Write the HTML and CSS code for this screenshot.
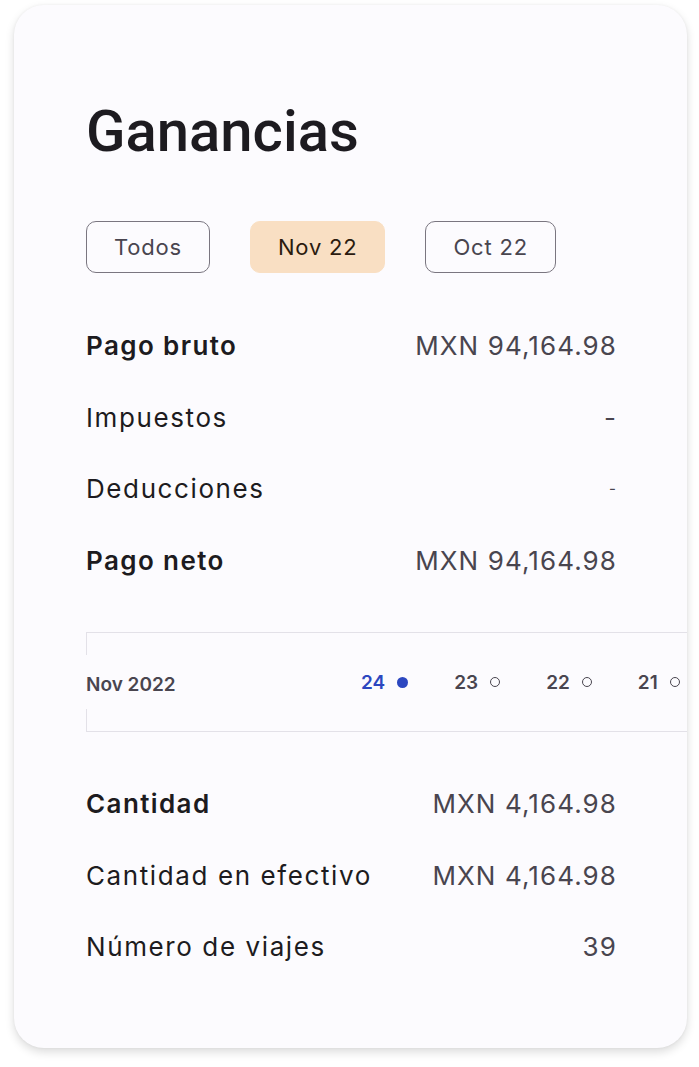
FILE: index.html
```html
<!DOCTYPE html>
<html lang="es">
  <head>
    <meta name="viewport" content="width=device-width, initial-scale=1">
    <link rel="stylesheet" href="styles.css">
    <title>Ganancias</title>
  </head>

  <body>
    <div class="card">
      <h1 class="title">Ganancias</h1>

      <div class="chips">
        <button class="chip">Todos</button>
        <button class="chip chipActive">Nov 22</button>
        <button class="chip">Oct 22</button>
      </div>

      <div class="rows">
        <div class="row strong"><span>Pago bruto</span><span class="value">MXN 94,164.98</span></div>
        <div class="row"><span>Impuestos</span><span class="value">-</span></div>
        <div class="row"><span>Deducciones</span><span class="value small">-</span></div>
        <div class="row strong"><span>Pago neto</span><span class="value">MXN 94,164.98</span></div>
      </div>

      <div class="timeline">
        <span class="month">Nov 2022</span>
        <div class="days">
          <div class="day current"><span>24</span><i class="dot"></i></div>
          <div class="day"><span>23</span><i class="dot"></i></div>
          <div class="day"><span>22</span><i class="dot"></i></div>
          <div class="day"><span>21</span><i class="dot"></i></div>
        </div>
      </div>

      <div class="rows">
        <div class="row strong"><span>Cantidad</span><span class="value">MXN 4,164.98</span></div>
        <div class="row"><span>Cantidad en efectivo</span><span class="value">MXN 4,164.98</span></div>
        <div class="row"><span>Número de viajes</span><span class="value">39</span></div>
      </div>
    </div>
  </body>
</html>
```

FILE: styles.css
```css
body {
  margin: 0;
  padding: 5px 12px 19px 14px;
  background: #ffffff;
  font-family: Inter, "Noto Sans", sans-serif;
  color: #1d1b20;
}

.card {
  background: #fcfbfe;
  border-radius: 30px;
  box-shadow: 0 4px 10px rgba(0, 0, 0, 0.14), 0 0 3px rgba(0, 0, 0, 0.05);
  padding: 86px 71px 50px 72px;
  height: 1043px;
  box-sizing: border-box;
  overflow: hidden;
}

.title {
  margin: 0;
  font-family: Roboto, "Noto Sans", sans-serif;
  font-size: 58px;
  font-weight: 500;
  line-height: 80px;
}

.chips {
  display: flex;
  gap: 40px;
  margin-top: 50px;
}

.chip {
  height: 52px;
  padding: 0 27px;
  border: 1.5px solid #7a7680;
  border-radius: 10px;
  background: transparent;
  font-family: inherit;
  font-size: 22px;
  letter-spacing: 0.8px;
  color: #49454f;
}

.chipActive {
  border-color: #f9dfc3;
  background: #f9dfc3;
  color: #2b1b0f;
}

.rows {
  margin-top: 37px;
}

.row {
  display: flex;
  justify-content: space-between;
  align-items: center;
  height: 71.5px;
  font-size: 26px;
  letter-spacing: 1.6px;
  color: #1d1b20;
}

.row.strong span:first-child {
  font-weight: 600;
  letter-spacing: 1.4px;
}

.value {
  color: #49454f;
  letter-spacing: 1.1px;
  margin-right: -1px;
}

.value.small {
  font-size: 15px;
}

.timeline {
  display: flex;
  align-items: center;
  height: 98px;
  margin: 36px -71px 0 0;
  border-top: 1px solid #e3e1e8;
  border-bottom: 1px solid #e3e1e8;
  background:
    linear-gradient(#e3e1e8, #e3e1e8) left top / 1px 22px no-repeat,
    linear-gradient(#e3e1e8, #e3e1e8) left bottom / 1px 22px no-repeat;
  font-size: 19px;
  font-weight: 600;
  color: #49454f;
}

.month {
  width: 275px;
  flex-shrink: 0;
  padding-top: 4px;
}

.days {
  display: flex;
  gap: 46px;
  white-space: nowrap;
}

.day {
  display: flex;
  align-items: center;
  gap: 12px;
}

.dot {
  width: 8px;
  height: 8px;
  border: 1.5px solid #49454f;
  border-radius: 50%;
}

.current {
  color: #2c47c0;
}

.current .dot {
  width: 11px;
  height: 11px;
  border: none;
  background: #2c47c0;
}

.timeline + .rows {
  margin-top: 36px;
}
```
